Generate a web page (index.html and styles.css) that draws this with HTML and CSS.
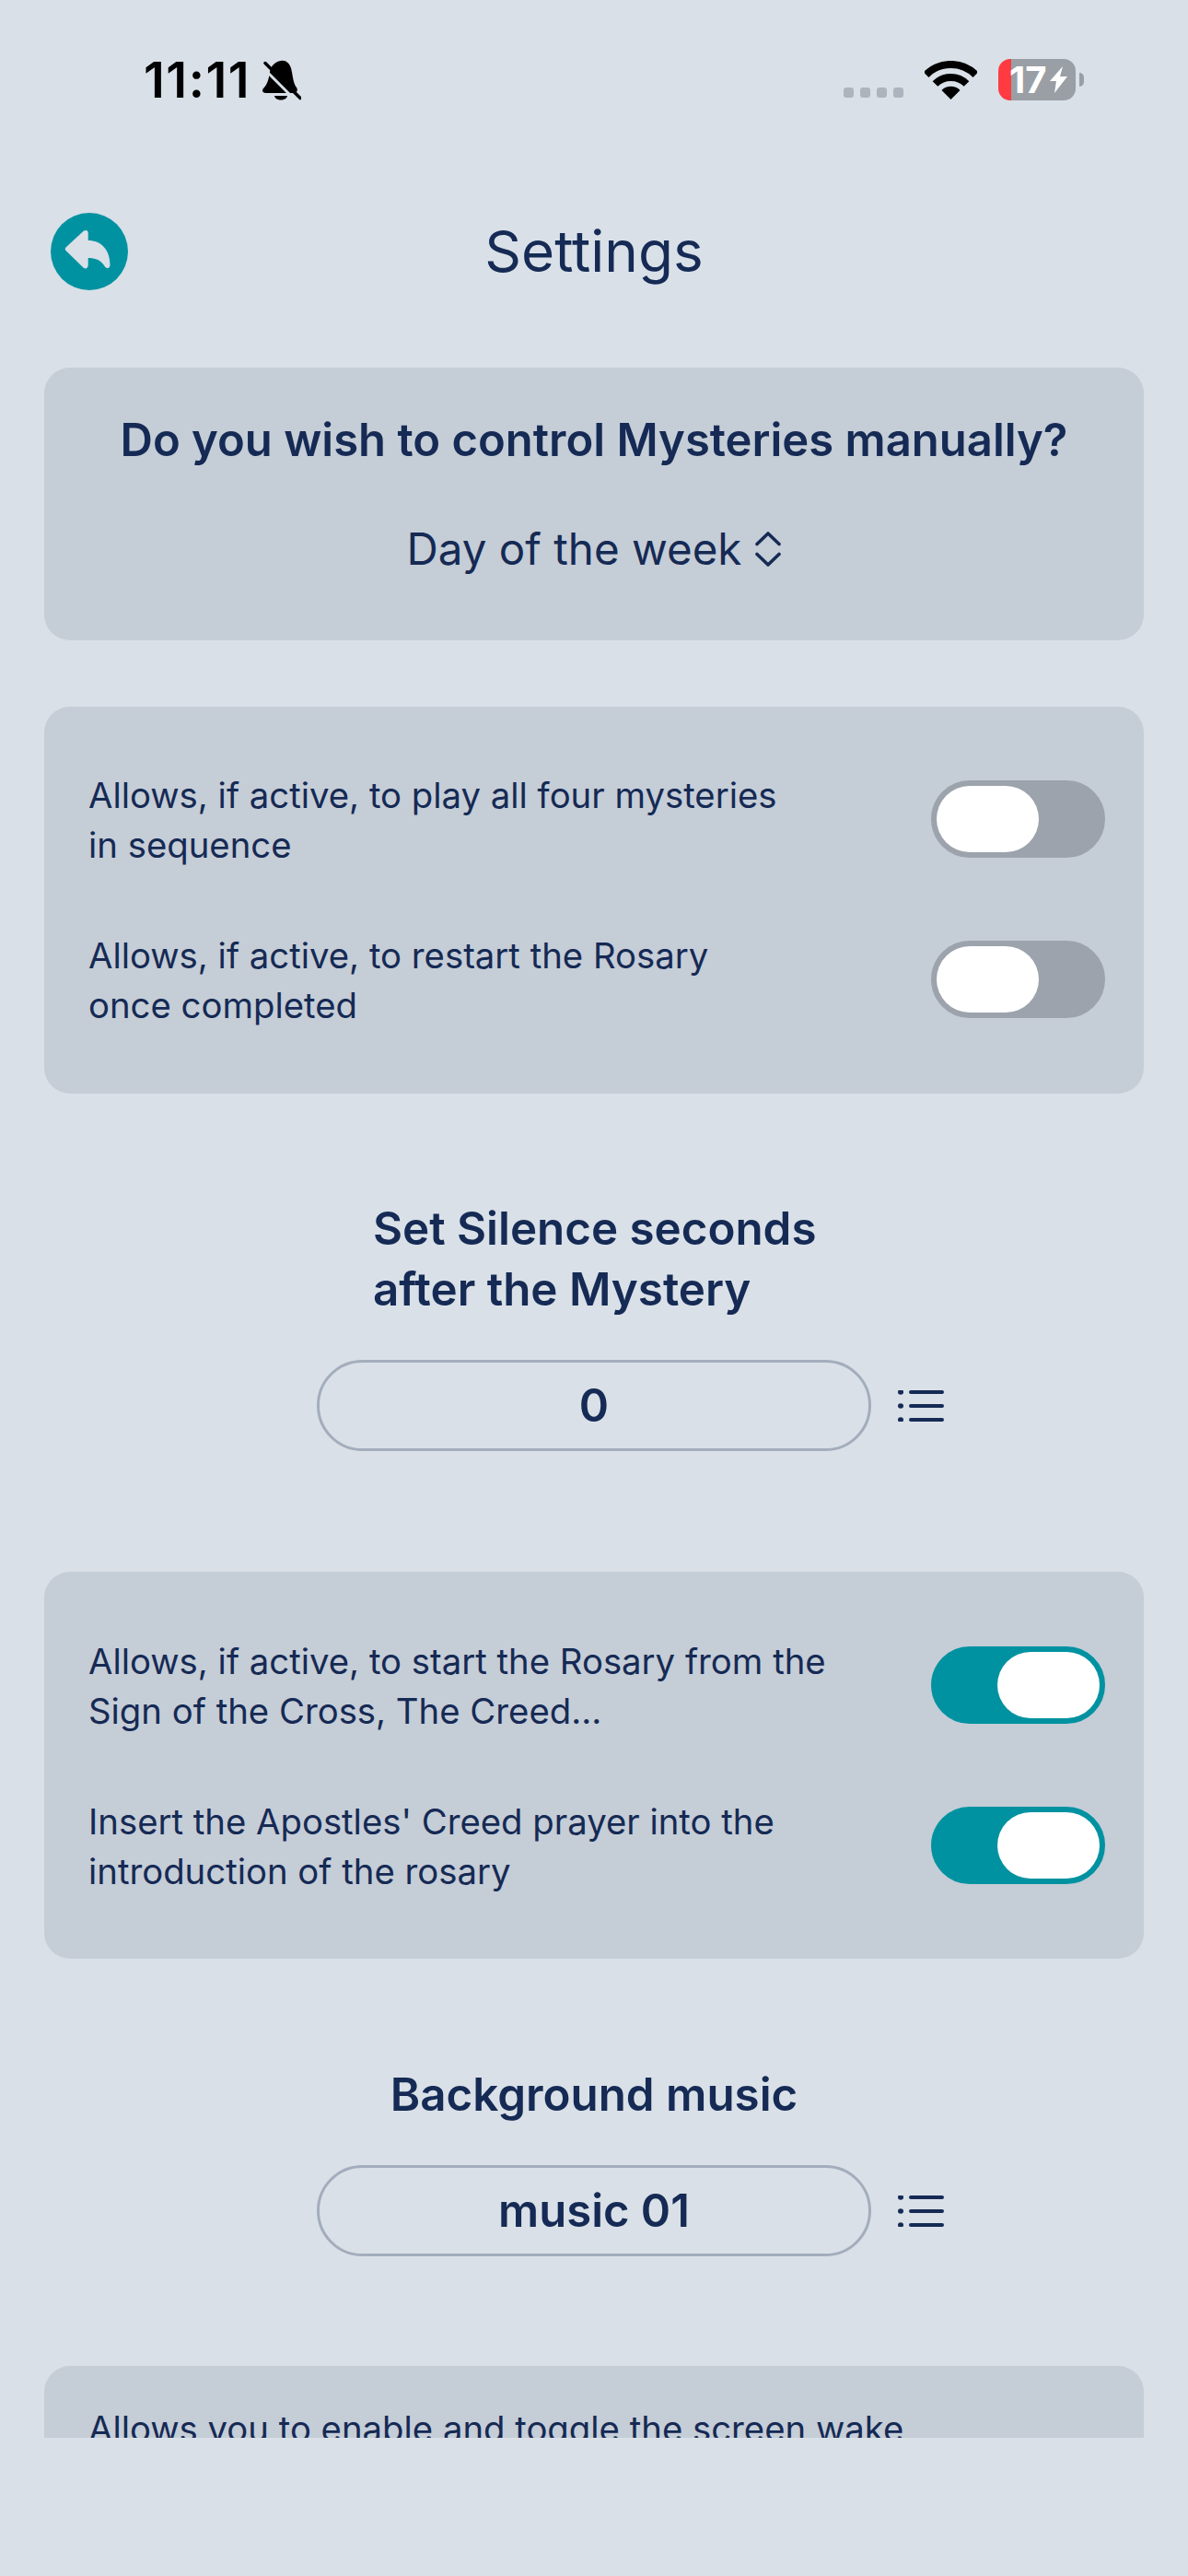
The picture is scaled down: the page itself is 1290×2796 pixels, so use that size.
FILE: index.html
```html
<!DOCTYPE html>
<html lang="en">
<head>
<meta charset="utf-8">
<title>Settings</title>
<link rel="stylesheet" href="styles.css">
</head>
<body>
<div class="status">
  <span class="time">11:11</span>
  <svg class="bell" viewBox="0 0 42 44" width="42" height="44">
    <path d="M20 1C25 0 29 3 31 9C33 16 33 25 37 30C39 33 37 36 34 36H4C0 36-1 33 1 31C6 26 7 19 8 13C9 7 13 2 20 1Z" fill="#000"/>
    <path d="M13 39H27C26 45 14 45 13 39Z" fill="#000"/>
    <line x1="-1" y1="7" x2="36" y2="44" stroke="#d9e0e7" stroke-width="3"/>
    <line x1="3" y1="3.500" x2="41" y2="41.500" stroke="#000" stroke-width="3.500" stroke-linecap="round"/>
  </svg>
  <span class="spacer"></span>
  <span class="dots"><i></i><i></i><i></i><i></i></span>
  <svg class="wifi" viewBox="0 0 57 42" width="57" height="42">
    <path d="M1.600 15.100A38 38 0 0 1 55.400 15.100" fill="none" stroke="#000" stroke-width="8"/>
    <path d="M11.500 25A24 24 0 0 1 45.500 25" fill="none" stroke="#000" stroke-width="8"/>
    <path d="M28.500 42L18.500 32A14 14 0 0 1 38.500 32Z" fill="#000"/>
  </svg>
  <span class="battery">
    <span class="batt-num">17</span>
    <svg class="bolt" viewBox="0 0 19 29" width="19" height="29"><path d="M14 0L0 16H7L5 29L19 11H11Z" fill="#fff"/></svg>
  </span>
  <span class="batt-cap"></span>
</div>

<div class="screen">
  <header class="header">
    <svg class="back" viewBox="0 0 84 84" width="84" height="84">
      <circle cx="42" cy="42" r="42" fill="#0092a1"/>
      <path d="M16.500 37.500L36 19.500Q40.500 17.500 40.700 22V30C55 30 64.500 40 64.500 57Q64 60.500 61 60Q59.500 60 58 57C54 51 48 49 40.700 49V57Q40 61.500 36 60L16.500 41Q15 39.200 16.500 37.500Z" fill="#d9e0e7"/>
    </svg>
    <h1 class="title">Settings</h1>
  </header>

  <section class="card card-mode">
    <h2 class="mode-q">Do you wish to control Mysteries manually?</h2>
    <div class="picker">
      <span>Day of the week</span>
      <svg class="chev" viewBox="0 0 28 38" width="28" height="38">
        <path d="M2 13.500L14 2L26 13.500M2 24.500L14 36L26 24.500" fill="none" stroke="#152a54" stroke-width="3.600" stroke-linecap="round" stroke-linejoin="round"/>
      </svg>
    </div>
  </section>

  <section class="card card-rows">
    <div class="row">
      <p class="row-text">Allows, if active, to play all four mysteries<br>in sequence</p>
      <div class="toggle"><span class="knob"></span></div>
    </div>
    <div class="row">
      <p class="row-text">Allows, if active, to restart the Rosary<br>once completed</p>
      <div class="toggle"><span class="knob"></span></div>
    </div>
  </section>

  <h3 class="sec-title sec-silence">Set Silence seconds<br>after the Mystery</h3>
  <div class="select-row">
    <div class="pill">0</div>
    <svg class="list" viewBox="0 0 50 34" width="50" height="34">
      <path d="M14 2H48M14 17H48M14 32H48" fill="none" stroke="#152a54" stroke-width="4" stroke-linecap="round"/>
      <ellipse cx="3" cy="2" rx="3" ry="2.800" fill="#152a54"/>
      <ellipse cx="3" cy="17" rx="3" ry="2.800" fill="#152a54"/>
      <ellipse cx="3" cy="32" rx="3" ry="2.800" fill="#152a54"/>
    </svg>
  </div>

  <section class="card card-rows card-after">
    <div class="row">
      <p class="row-text">Allows, if active, to start the Rosary from the<br>Sign of the Cross, The Creed...</p>
      <div class="toggle on"><span class="knob"></span></div>
    </div>
    <div class="row">
      <p class="row-text">Insert the Apostles' Creed prayer into the<br>introduction of the rosary</p>
      <div class="toggle on"><span class="knob"></span></div>
    </div>
  </section>

  <h3 class="sec-title sec-music">Background music</h3>
  <div class="select-row">
    <div class="pill">music 01</div>
    <svg class="list" viewBox="0 0 50 34" width="50" height="34">
      <path d="M14 2H48M14 17H48M14 32H48" fill="none" stroke="#152a54" stroke-width="4" stroke-linecap="round"/>
      <ellipse cx="3" cy="2" rx="3" ry="2.800" fill="#152a54"/>
      <ellipse cx="3" cy="17" rx="3" ry="2.800" fill="#152a54"/>
      <ellipse cx="3" cy="32" rx="3" ry="2.800" fill="#152a54"/>
    </svg>
  </div>

  <section class="card card-last">
    <p class="row-text">Allows you to enable and toggle the screen wake</p>
  </section>
</div>
</body>
</html>
```
FILE: styles.css
```css
* { box-sizing: border-box; }
html, body { margin: 0; padding: 0; }
body {
  width: 1290px;
  height: 2796px;
  overflow: hidden;
  background: #d9e0e7;
  color: #152a54;
  font-family: Inter, "Liberation Sans", sans-serif;
}
.status {
  height: 174px;
  display: flex;
  align-items: center;
  padding: 0 113px 0 156px;
}
.time {
  font-size: 54px;
  font-weight: 600;
  letter-spacing: 1.500px;
  color: #000;
  line-height: 1;
}
.bell { margin-left: 13px; }
.spacer { flex: 1; }
.dots { display: flex; gap: 7px; margin-top: 27px; }
.dots i { width: 11px; height: 11px; border-radius: 3px; background: #aeb4bd; display: block; }
.wifi { margin-left: 23px; margin-top: -1px; }
.battery {
  width: 84px;
  height: 45px;
  margin-left: 23px;
  margin-top: -1px;
  border-radius: 13px;
  background: linear-gradient(90deg, #ff3b41 14px, #9a9fa5 14px);
  display: flex;
  align-items: center;
  padding-left: 12px;
  gap: 3px;
}
.batt-num { font-size: 40px; font-weight: 700; color: #fff; line-height: 1; }
.batt-cap { width: 5px; height: 15px; margin-left: 4px; margin-top: -1px; border-radius: 0 5px 5px 0; background: #9a9fa5; }

.screen {
  height: 2472px;
  overflow: hidden;
  padding: 0 48px;
}
.header {
  height: 198px;
  margin-bottom: 27px;
  display: grid;
  grid-template-columns: 1fr auto 1fr;
  align-items: center;
}
.back { margin-left: 7px; }
.title { margin: 0; font-size: 62px; font-weight: 400; line-height: 1; grid-column: 2; }
.card { background: #c5cdd7; border-radius: 28px; }
.card-mode {
  height: 296px;
  padding-top: 48px;
  text-align: center;
}
.mode-q { margin: 0; font-size: 49px; font-weight: 600; line-height: 62px; }
.picker {
  margin-top: 56px;
  height: 62px;
  font-size: 47.500px;
  font-weight: 400;
  line-height: 62px;
  display: flex;
  justify-content: center;
  align-items: center;
  gap: 15px;
}
.card-rows {
  margin-top: 72px;
  height: 420px;
  padding: 68px 42px 70px 48px;
  display: flex;
  flex-direction: column;
  gap: 66px;
}
.row {
  display: flex;
  justify-content: space-between;
  align-items: center;
  height: 108px;
}
.row-text { margin: 2px 0 0; font-size: 38.300px; line-height: 54px; font-weight: 400; }
.toggle {
  width: 189px;
  height: 84px;
  border-radius: 42px;
  border: 6px solid #9ca3ac;
  background: #9ca3ac;
  display: flex;
}
.toggle.on { border-color: #0092a1; background: #0092a1; justify-content: flex-end; }
.knob { width: 111px; height: 72px; border-radius: 36px; background: #fff; display: block; }
.sec-title { margin: 0; font-size: 49.300px; font-weight: 600; line-height: 66px; }
.sec-silence { margin-top: 113px; margin-left: 357px; }
.sec-music { margin-top: 114px; text-align: center; }
.select-row {
  margin-top: 44px;
  display: grid;
  grid-template-columns: 1fr 602px 1fr;
  column-gap: 29px;
  align-items: center;
}
.pill {
  grid-column: 2;
  height: 99px;
  border: 3px solid #a3adbc;
  border-radius: 50px;
  font-size: 49px;
  font-weight: 600;
  display: flex;
  align-items: center;
  justify-content: center;
}
.card-after { margin-top: 131px; padding-top: 69px; padding-bottom: 69px; }
.card-last {
  margin-top: 119px;
  height: 300px;
  padding: 39px 48px;
}
```
